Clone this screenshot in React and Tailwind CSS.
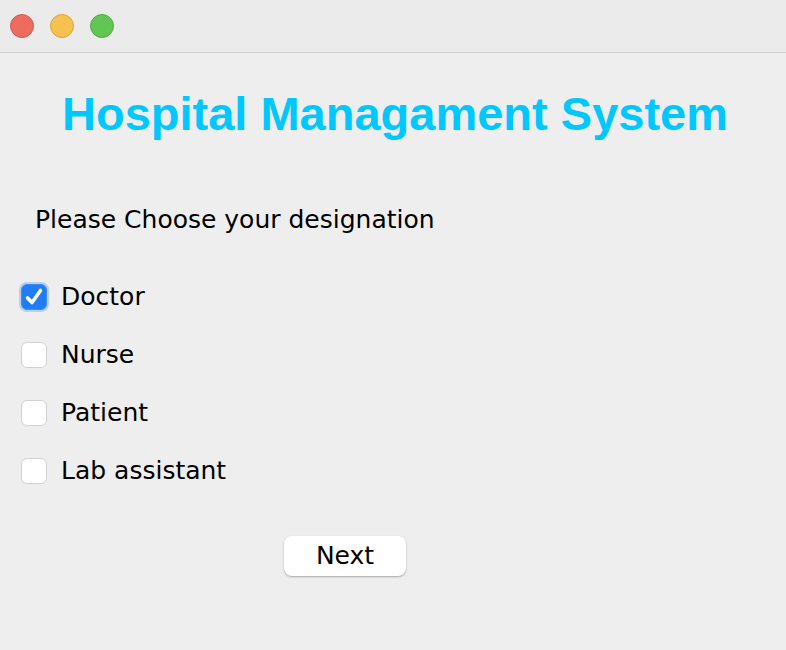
import React, { useState } from "react";

const options = ["Doctor", "Nurse", "Patient", "Lab assistant"];

const Check = ({ checked }) => (
  <span
    className={`flex items-center justify-center w-[26px] h-[26px] rounded-[6px] border ${
      checked
        ? "bg-[#1f7ef6] border-[#3a8df5] shadow-[0_0_0_2px_rgba(90,150,240,0.35)]"
        : "bg-white border-[#d2d2d2]"
    }`}
  >
    {checked && (
      <svg width="22" height="22" viewBox="0 0 22 22">
        <path d="M4.5 12 L9 16.5 L17.5 4.5" fill="none" stroke="white" strokeWidth="3.6" strokeLinecap="round" strokeLinejoin="round" />
      </svg>
    )}
  </span>
);

const App = () => {
  const [selected, setSelected] = useState({ Doctor: true }); // 체크 상태

  return (
    <div className="w-[786px] h-[650px] bg-[#eeeeee] flex flex-col overflow-hidden">
      {/* 타이틀바 */}
      <div className="h-[53px] shrink-0 bg-[#ebebec] border-b border-[#cfcfcf] flex items-center gap-4 pl-[10px]">
        <span className="w-6 h-6 rounded-full bg-[#ee6b60] border border-[#d65a50]" />
        <span className="w-6 h-6 rounded-full bg-[#f6c14f] border border-[#dca43a]" />
        <span className="w-6 h-6 rounded-full bg-[#62c655] border border-[#4fae43]" />
      </div>

      <div className="flex flex-col font-['DejaVu_Sans',sans-serif] text-black">
        <h1 className="mt-[33px] text-center text-[47px] leading-[56px] font-bold text-[#00c8ff] font-['Liberation_Sans',Arial,sans-serif] pl-[4px]">
          Hospital Managament System
        </h1>

        <div className="mt-[63px] pl-[35px] text-[25px] leading-[30px]">
          Please Choose your designation
        </div>

        <div className="mt-[49px] pl-[21px] flex flex-col gap-[32px]">
          {options.map((o) => (
            <label
              key={o}
              className="flex items-center gap-[14px] h-[26px] cursor-pointer text-[25px]"
              onClick={() => setSelected({ ...selected, [o]: !selected[o] })}
            >
              <Check checked={!!selected[o]} />
              <span>{o}</span>
            </label>
          ))}
        </div>

        <div className="mt-[52px] flex pl-[284px]">
          <button className="w-[122px] h-[40px] bg-white rounded-[8px] shadow-[0_1px_2px_rgba(0,0,0,0.3)] text-[25px] leading-[40px]">
            Next
          </button>
        </div>
      </div>
    </div>
  );
};

export default App;
